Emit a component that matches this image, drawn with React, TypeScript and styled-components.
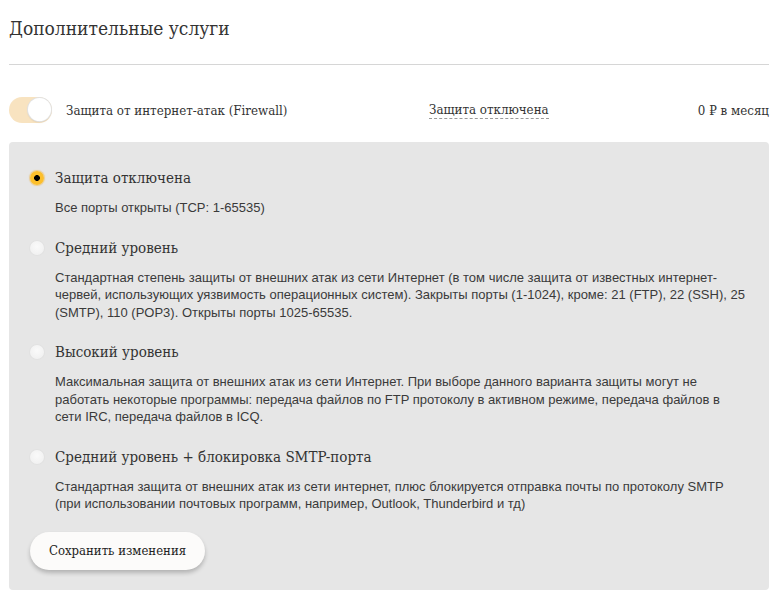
import React, { useState } from 'react'
import styled, { createGlobalStyle } from 'styled-components'

const slab = `"DejaVu Serif Condensed", "DejaVu Serif", serif`

const GlobalStyle = createGlobalStyle`
  body {
    margin: 0;
    background: #fff;
    font-family: ${slab};
    color: #333;
  }
`

const Page = styled.div`
  padding: 0 10px 0 9px;
`
const Title = styled.h2`
  margin: 14px 0 0;
  padding-bottom: 22px;
  border-bottom: 1px solid #d6d6d6;
  font-size: 19px;
  line-height: 28px;
  font-weight: normal;
  color: #333;
`
const ServiceRow = styled.div`
  display: grid;
  grid-template-columns: 57px 363px 1fr auto;
  align-items: center;
  height: 26px;
  margin-top: 32px;
  font-size: 13.2px;
  color: #333;
`
const Toggle = styled.button<{ $on: boolean }>`
  position: relative;
  width: 43px;
  height: 26px;
  padding: 0;
  border: none;
  border-radius: 13px;
  background: ${(p) => (p.$on ? '#fbd98f' : '#f8e3c0')};
  cursor: pointer;

  &::after {
    content: '';
    position: absolute;
    top: 1px;
    left: ${(p) => (p.$on ? '1px' : '19px')};
    width: 23px;
    height: 23px;
    border-radius: 50%;
    background: #fff;
    box-shadow: 0 0 0 1px #e2e2e2, 0 1px 2px rgba(0, 0, 0, 0.15);
  }
`
const StatusLink = styled.span`
  justify-self: start;
  padding-bottom: 1px;
  border-bottom: 1px dashed #9a9a9a;
  cursor: pointer;
`
const Price = styled.span`
  white-space: nowrap;
`
const Ruble = styled.span`
  font-family: "DejaVu Serif", "Noto Sans", sans-serif;
  font-size: 12px;
`
const Panel = styled.div`
  margin-top: 19px;
  padding: 26px 20px 20px 21px;
  background: #e6e6e6;
  border-radius: 4px;
`
const Option = styled.label`
  display: grid;
  grid-template-columns: 14px 1fr;
  column-gap: 11px;
  cursor: pointer;

  & + & {
    margin-top: 21px;
  }
`
const Radio = styled.span<{ $checked: boolean }>`
  align-self: center;
  width: 14px;
  height: 14px;
  border-radius: 50%;
  background: ${(p) =>
    p.$checked
      ? 'radial-gradient(circle, #000 0 2.6px, #fcbf2c 3.2px)'
      : 'radial-gradient(circle at 50% 40%, #fafafa, #eeeeee)'};
  box-shadow: ${(p) =>
    p.$checked ? '0 0 1px 1px rgba(240, 170, 40, 0.45)' : '0 0 2px rgba(0, 0, 0, 0.08)'};
`
const OptionTitle = styled.span`
  font-size: 15px;
  line-height: 20px;
  color: #333;
`
const OptionText = styled.p`
  grid-column: 2;
  margin: 11px 0 0;
  font-family: "Liberation Sans", Arial, sans-serif;
  font-size: 13px;
  line-height: 17.5px;
  color: #3a3a3a;
`
const SaveButton = styled.button`
  margin-top: 19px;
  height: 38px;
  padding: 0 19px;
  border: none;
  border-radius: 19px;
  background: #fcfbfa;
  box-shadow: 0 3px 4px rgba(0, 0, 0, 0.22);
  font-family: ${slab};
  font-size: 13px;
  color: #222;
  cursor: pointer;
`

const levels = [
  {
    title: 'Защита отключена',
    text: 'Все порты открыты (TCP: 1-65535)',
  },
  {
    title: 'Средний уровень',
    text: 'Стандартная степень защиты от внешних атак из сети Интернет (в том числе защита от известных интернет-червей, использующих уязвимость операционных систем). Закрыты порты (1-1024), кроме: 21 (FTP), 22 (SSH), 25 (SMTP), 110 (POP3). Открыты порты 1025-65535.',
  },
  {
    title: 'Высокий уровень',
    text: 'Максимальная защита от внешних атак из сети Интернет. При выборе данного варианта защиты могут не работать некоторые программы: передача файлов по FTP протоколу в активном режиме, передача файлов в сети IRC, передача файлов в ICQ.',
  },
  {
    title: 'Средний уровень + блокировка SMTP-порта',
    text: 'Стандартная защита от внешних атак из сети интернет, плюс блокируется отправка почты по протоколу SMTP (при использовании почтовых программ, например, Outlook, Thunderbird и тд)',
  },
]

const App = () => {
  const [enabled, setEnabled] = useState(false)
  const [level, setLevel] = useState(0)

  return (
    <Page>
      <GlobalStyle />
      <Title>Дополнительные услуги</Title>
      <ServiceRow>
        <Toggle $on={enabled} onClick={() => setEnabled(!enabled)} />
        <span>Защита от интернет-атак (Firewall)</span>
        <StatusLink>{levels[level].title}</StatusLink>
        <Price>
          0 <Ruble>₽</Ruble> в месяц
        </Price>
      </ServiceRow>
      <Panel>
        {levels.map((l, i) => (
          <Option key={l.title} onClick={() => setLevel(i)}>
            <Radio $checked={level === i} />
            <OptionTitle>{l.title}</OptionTitle>
            <OptionText>{l.text}</OptionText>
          </Option>
        ))}
        <SaveButton>Сохранить изменения</SaveButton>
      </Panel>
    </Page>
  )
}

export default App
